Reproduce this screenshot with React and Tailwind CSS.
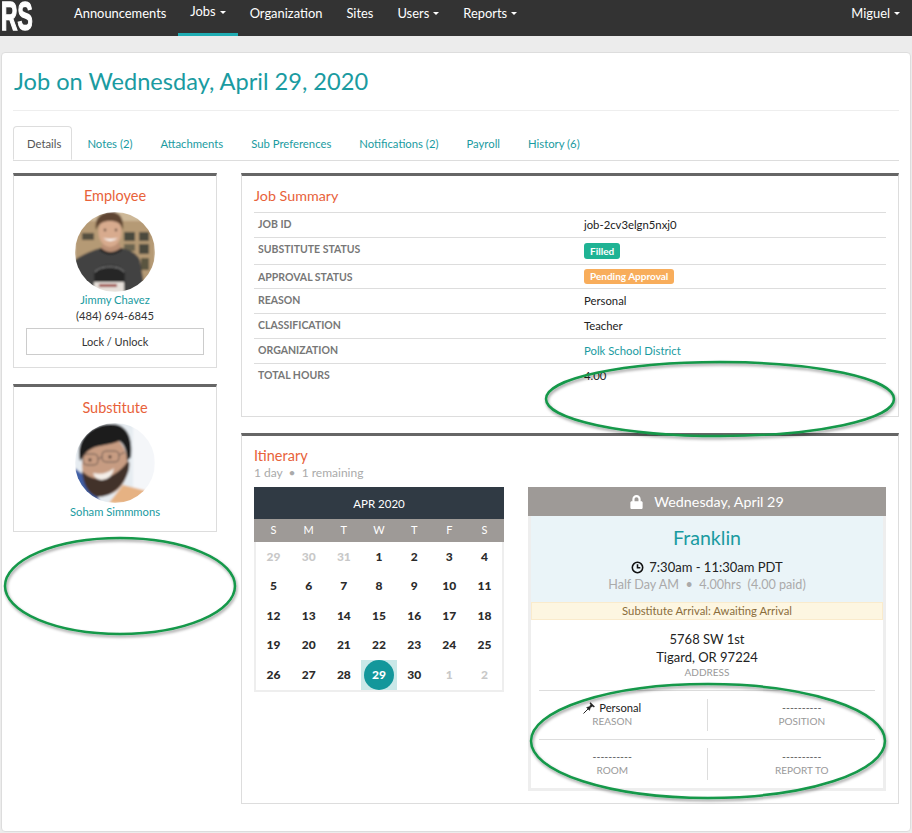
import React from "react";
import { FaLock } from "react-icons/fa";

const Caret = () => (
  <span className="ml-[4px] inline-block w-0 h-0 border-x-[3px] border-x-transparent border-t-[3px] border-t-white" />
);

function NavItem({ children, caret, active }) {
  return (
    <a className={`h-9 px-3 pb-[9px] flex items-center text-white text-[12.9px] whitespace-nowrap ${active ? "border-b-[3px] border-[#1fadb3] pb-[6px]" : ""}`}>
      {children}
      {caret && <Caret />}
    </a>
  );
}

function Tab({ children, active }) {
  return (
    <a className={`h-[34px] pt-[2px] flex items-center text-[11.3px] whitespace-nowrap ${active ? "bg-white border border-[#ddd] border-b-white rounded-t-[4px] -mb-px text-[#555] pl-[13px] pr-[10px]" : "px-[13px] text-[#1a9ba1]"}`}>
      {children}
    </a>
  );
}

function EmployeePhoto() {
  return (
    <svg viewBox="0 0 80 80" className="w-20 h-20 rounded-full block">
      <defs><filter id="b1"><feGaussianBlur stdDeviation="0.8" /></filter></defs>
      <g filter="url(#b1)">
        <rect width="80" height="80" fill="#b59a74" />
        <rect x="0" y="0" width="80" height="9" fill="#cdb898" />
        <rect x="7" y="21" width="12" height="7" fill="#55503f" />
        <rect x="49" y="20" width="11" height="9" fill="#4a4a3c" />
        <rect x="64" y="20" width="10" height="9" fill="#4c4a3c" />
        <rect x="49" y="32" width="11" height="7" fill="#6a6450" />
        <rect x="64" y="32" width="10" height="10" fill="#4c4a3c" />
        <rect x="66" y="46" width="8" height="12" fill="#5a553f" />
        <path d="M0 48 C8 42 18 38 26 36 L46 36 C56 38 62 42 65 48 L70 80 L0 80Z" fill="#424242" />
        <path d="M26 36 Q35 44 46 36 L44 31 L28 31Z" fill="#bb8f74" />
        <path d="M25 37 Q35 46 47 37" stroke="#1e1e1e" strokeWidth="2" fill="none" />
        <ellipse cx="35" cy="20" rx="11.5" ry="15" fill="#d8ab8e" />
        <path d="M21 18 C19 5 27 0 36 0 C46 0 49 8 48 18 C46 11 42 9 35 9 C28 9 24 11 21 18Z" fill="#5e4430" />
        <circle cx="30" cy="18" r="1.2" fill="#3a2a20" />
        <circle cx="41" cy="18" r="1.2" fill="#3a2a20" />
        <path d="M28 26 Q35 32 43 26 Q35 28 28 26Z" fill="#fff" />
        <path d="M19 62 C20 50 50 50 50 62 L50 72 L19 72Z" fill="#262626" />
        <path d="M20 60 C24 53 46 53 49 60" stroke="#b0b0b0" strokeWidth="0.8" fill="none" />
        <rect x="19" y="70" width="30" height="10" fill="#e6e0da" />
        <rect x="24" y="72" width="18" height="3" fill="#9e4a44" />
      </g>
    </svg>
  );
}

function SubstitutePhoto() {
  return (
    <svg viewBox="0 0 80 80" className="w-20 h-20 rounded-full block">
      <defs><filter id="b2"><feGaussianBlur stdDeviation="0.8" /></filter></defs>
      <g filter="url(#b2)">
        <rect width="80" height="80" fill="#e6ecf1" />
        <rect x="58" y="0" width="22" height="80" fill="#f4f6f9" />
        <path d="M0 45 L12 55 L26 80 L0 80Z" fill="#3f5fa5" />
        <path d="M34 80 L48 62 L72 68 L62 80Z" fill="#e6b283" />
        <ellipse cx="30" cy="42" rx="23" ry="30" fill="#c79c82" />
        <path d="M7 48 C18 60 36 58 50 42 C54 36 55 38 54 46 C50 62 38 74 22 74 C12 70 8 60 7 48Z" fill="#42322b" />
        <path d="M18 50 Q30 53 39 45 Q37 56 27 57 Q20 57 18 50Z" fill="#f4eee8" />
        <path d="M5 38 C0 14 18 1 36 1 C52 1 58 14 56 34 L52 38 C52 26 48 20 44 18 C32 24 16 20 8 34Z" fill="#1d1c1f" />
        <rect x="8" y="31" width="15" height="11" rx="4" fill="none" stroke="#6a5850" strokeWidth="1" />
        <rect x="27" y="28" width="17" height="11" rx="4" fill="none" stroke="#6a5850" strokeWidth="1" />
        <path d="M23 36 L27 34 M44 32 L50 29" stroke="#6a5850" strokeWidth="1" />
        <circle cx="15" cy="37" r="1.4" fill="#2a2020" />
        <circle cx="35" cy="34" r="1.4" fill="#2a2020" />
      </g>
    </svg>
  );
}

const rows = [
  ["JOB ID", <span>job-2cv3elgn5nxj0</span>, "h-[25px]", "pt-[3px]"],
  ["SUBSTITUTE STATUS", <span className="h-4 leading-4 px-[6px] mt-[1px] rounded-[3px] bg-[#1fb394] text-white text-[10px] font-bold">Filled</span>, "h-[27px]", "pt-[3px]"],
  ["APPROVAL STATUS", <span className="h-[15px] leading-[15px] px-[6px] rounded-[3px] bg-[#f8ad5b] text-white text-[10px] font-bold">Pending Approval</span>, "h-[24px]", "pt-[4px]"],
  ["REASON", <span>Personal</span>, "h-[25px]", "pt-[3px]"],
  ["CLASSIFICATION", <span>Teacher</span>, "h-[25px]", "pt-[3px]"],
  ["ORGANIZATION", <a className="text-[#1a9ba1]">Polk School District</a>, "h-[25px]", "pt-[3px]"],
  ["TOTAL HOURS", <span>4.00</span>, "h-[25px]", "pt-[3px]"],
];

function SummaryRow({ label, value, h, pt }) {
  return (
    <div className={`flex items-start border-t border-[#ddd] ${h}`}>
      <div className={`w-[330px] pl-1 ${pt} text-[10.5px] leading-[16px] font-bold text-[#777]`}>{label}</div>
      <div className="flex pt-[4px] text-[11.3px] leading-[16px] text-[#222]">{value}</div>
    </div>
  );
}

const days = [
  [29, 30, 31, 1, 2, 3, 4], [5, 6, 7, 8, 9, 10, 11], [12, 13, 14, 15, 16, 17, 18],
  [19, 20, 21, 22, 23, 24, 25], [26, 27, 28, 29, 30, 1, 2],
];

function Calendar() {
  return (
    <div className="w-[250px] h-[205px] flex flex-col">
      <div className="h-8 pt-px bg-[#303a44] text-white text-[11.5px] flex items-center justify-center">APR 2020</div>
      <div className="h-[23px] bg-[#9e9a97] grid grid-cols-7 items-center text-center text-white text-[11px] px-[2px]">
        {["S", "M", "T", "W", "T", "F", "S"].map((d, i) => <span key={i}>{d}</span>)}
      </div>
      <div className="flex-1 border-x-2 border-b-2 border-[#eee] flex flex-col">
        {days.map((week, r) => (
          <div key={r} className="flex-1 grid grid-cols-7">
            {week.map((d, c) => {
              const muted = (r === 0 && c < 3) || (r === 4 && c > 4);
              const today = r === 4 && c === 3;
              return (
                <div key={c} className={`flex items-center justify-center text-[12px] font-black ${muted ? "text-[#c8c8c8]" : "text-[#2b2b2b]"} ${today ? "bg-[#c9e8e8]" : ""}`}>
                  {today ? <span className="w-[30px] h-[30px] rounded-full bg-[#13979b] text-white flex items-center justify-center">{d}</span> : d}
                </div>
              );
            })}
          </div>
        ))}
      </div>
    </div>
  );
}

function Cell({ value, label, pin, border }) {
  return (
    <div className={`flex-1 my-2 h-8 flex flex-col items-center ${border ? "border-l border-[#ddd]" : ""}`}>
      <div className={`mt-px h-[15px] leading-[16px] relative ${pin ? "pl-4 text-[11.2px] text-[#222]" : "text-[10.6px] text-[#666]"}`}>
        {pin && (
          <svg viewBox="0 0 12 12" className="absolute left-0 top-[2px] w-3 h-3" fill="#222" stroke="#222">
            <path d="M0.5 11.5L5 7" strokeWidth="1" />
            <path d="M3.5 5.5L6.5 8.5L7.5 5.5L10 4L8 2L6.5 4.5Z" strokeWidth="0.4" />
            <path d="M7 0.7L11.3 5" strokeWidth="1.4" />
          </svg>
        )}
        {value}
      </div>
      <div className="h-[12px] leading-[12px] text-[10px] text-[#999]">{label}</div>
    </div>
  );
}

function DayCard() {
  return (
    <div className="w-[358px] h-[304px] flex flex-col">
      <div className="h-[29px] bg-[#9e9a97] text-white text-[14.3px] flex items-center justify-center gap-[11px]">
        <FaLock className="w-[13px] h-[14px]" />
        <span>Wednesday, April 29</span>
      </div>
      <div className="flex-1 border-x-[3px] border-b-[3px] border-[#eee] flex flex-col">
        <div className="h-[86px] bg-[#eaf4f8] flex flex-col items-center">
          <div className="mt-[9px] h-[26px] leading-[26px] text-[19.6px] text-[#1a9ba1]">Franklin</div>
          <div className="mt-[7px] h-[18px] leading-[18px] text-[13px] text-[#222] flex items-center gap-[5px]">
            <svg viewBox="0 0 14 14" className="w-[13px] h-[13px]" fill="none" stroke="#111" strokeWidth="1.7">
              <circle cx="7" cy="7" r="5.6" /><path d="M7 3.5V7.3H10" />
            </svg>
            7:30am - 11:30am PDT
          </div>
          <div className="h-[18px] leading-[18px] text-[12.6px] text-[#aaa]">Half Day AM &nbsp;•&nbsp; 4.00hrs &nbsp;(4.00 paid)</div>
        </div>
        <div className="h-[18px] bg-[#fdf6e1] border border-[#faebcc] text-[#8a6d3b] text-[11.3px] flex items-center justify-center">Substitute Arrival: Awaiting Arrival</div>
        <div className="flex-1 flex flex-col items-center">
          <div className="mt-[10px] h-[18px] leading-[18px] text-[13px] text-[#222]">5768 SW 1st</div>
          <div className="h-[18px] leading-[18px] text-[13px] text-[#222]">Tigard, OR 97224</div>
          <div className="h-[12px] leading-[12px] text-[10px] text-[#999]">ADDRESS</div>
          <div className="mt-3 w-[336px] border-t border-[#ddd]">
            <div className="-mx-[21px] flex">
              <Cell value="Personal" label="REASON" pin />
              <Cell value="----------" label="POSITION" border />
            </div>
          </div>
          <div className="w-[336px] border-t border-[#ddd]">
            <div className="-mx-[21px] flex">
              <Cell value="----------" label="ROOM" />
              <Cell value="----------" label="REPORT TO" border />
            </div>
          </div>
        </div>
      </div>
    </div>
  );
}

export default function App() {
  return (
    <div className="relative w-[912px] h-[833px] overflow-hidden bg-[#ececec] font-['Lato','Liberation_Sans',sans-serif] text-[#333]">
      <nav className="h-9 bg-[#333] flex">
        <div className="w-[62px] h-9">
          <span className="block ml-px font-['Liberation_Sans',sans-serif] font-bold text-[40px] leading-[32px] text-white origin-left scale-x-[0.57] [-webkit-text-stroke:1.5px_white]">RS</span>
        </div>
        <NavItem>Announcements</NavItem>
        <NavItem caret active>Jobs</NavItem>
        <NavItem>Organization</NavItem>
        <NavItem>Sites</NavItem>
        <NavItem caret>Users</NavItem>
        <NavItem caret>Reports</NavItem>
        <div className="ml-auto"><NavItem caret>Miguel</NavItem></div>
      </nav>

      <main className="mt-4 ml-px mr-px h-[780px] bg-white border border-[#ddd] rounded-[4px] px-[11px]">
        <h1 className="mt-[12px] ml-px h-[32px] leading-[32px] text-[23.6px] text-[#1a9ba1]">Job on Wednesday, April 29, 2020</h1>
        <div className="mt-[13px] w-[886px] border-t border-[#eee]" />
        <div className="mt-[15px] w-[886px] flex gap-[2px] border-b border-[#ddd]">
          <Tab active>Details</Tab>
          <Tab>Notes (2)</Tab>
          <Tab>Attachments</Tab>
          <Tab>Sub Preferences</Tab>
          <Tab>Notifications (2)</Tab>
          <Tab>Payroll</Tab>
          <Tab>History (6)</Tab>
        </div>

        <div className="mt-3 flex gap-6 w-[886px]">
          <div className="w-[204px] flex flex-col gap-4">
            <section className="h-[195px] border border-[#ddd] border-t-[3px] border-t-[#666] flex flex-col items-center">
              <h3 className="mt-[10px] h-[20px] leading-[20px] text-[14.5px] text-[#e8623a]">Employee</h3>
              <div className="mt-[6px]"><EmployeePhoto /></div>
              <a className="h-4 leading-4 text-[11.2px] text-[#1a9ba1]">Jimmy Chavez</a>
              <div className="h-4 leading-4 text-[11.2px] text-[#333]">(484) 694-6845</div>
              <button className="mt-1 pt-px w-[178px] h-[27px] border border-[#ccc] text-[11px] text-[#333]">Lock / Unlock</button>
            </section>
            <section className="h-[148px] border border-[#ddd] border-t-[3px] border-t-[#666] flex flex-col items-center">
              <h3 className="mt-[11px] h-[20px] leading-[20px] text-[14.5px] text-[#e8623a]">Substitute</h3>
              <div className="mt-[5px]"><SubstitutePhoto /></div>
              <a className="h-4 leading-4 mt-[1px] text-[11.2px] text-[#1a9ba1]">Soham Simmmons</a>
            </section>
          </div>

          <div className="w-[658px] flex flex-col gap-4">
            <section className="h-[244px] border border-[#ddd] border-t-[3px] border-t-[#666] px-3">
              <h3 className="mt-[10px] h-[20px] leading-[20px] text-[14.3px] text-[#e8623a]">Job Summary</h3>
              <div className="mt-[6px]">
                {rows.map(([l, v, h, pt]) => <SummaryRow key={l} label={l} value={v} h={h} pt={pt} />)}
              </div>
            </section>
            <section className="h-[371px] border border-[#ddd] border-t-[3px] border-t-[#666] px-3">
              <h3 className="mt-[11px] h-[18px] leading-[18px] text-[14.5px] text-[#e8623a]">Itinerary</h3>
              <div className="h-[16px] leading-[16px] text-[12px] text-[#aaa]">1 day &nbsp;•&nbsp; 1 remaining</div>
              <div className="mt-[6px] flex gap-6">
                <Calendar />
                <DayCard />
              </div>
            </section>
          </div>
        </div>
      </main>

      <svg className="absolute inset-0 pointer-events-none" width="912" height="833" fill="none">
        <defs>
          <filter id="sh" x="-10%" y="-10%" width="120%" height="130%">
            <feDropShadow dx="1" dy="2" stdDeviation="1.5" floodColor="#000" floodOpacity="0.4" />
          </filter>
        </defs>
        <g stroke="#13984a" strokeWidth="2.5" filter="url(#sh)">
          <ellipse cx="720" cy="399" rx="174" ry="37" />
          <ellipse cx="120" cy="586" rx="115" ry="48" />
          <ellipse cx="708" cy="741" rx="177" ry="57" />
        </g>
      </svg>
    </div>
  );
}
